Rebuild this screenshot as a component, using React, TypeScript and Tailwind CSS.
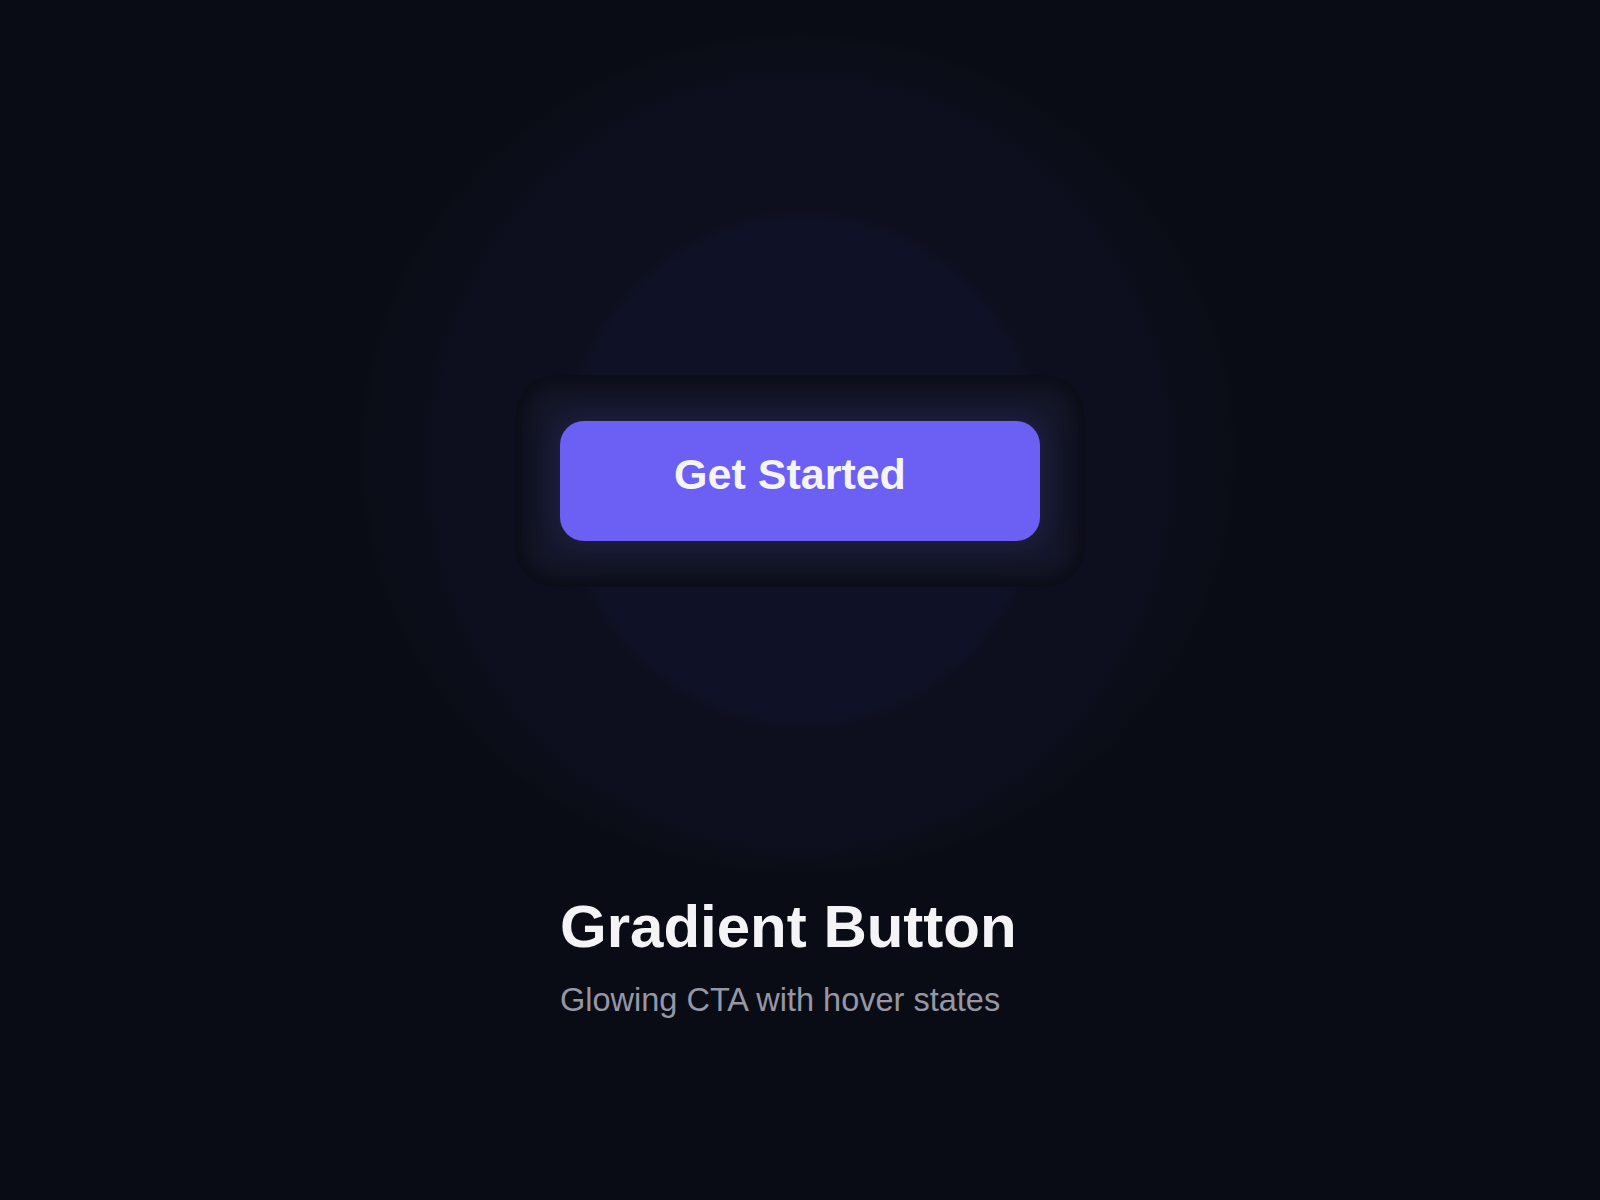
export default function App() {
  return (
    <main className="flex min-h-screen w-full justify-center bg-[#0a0c15] bg-[radial-gradient(ellipse_250px_265px_at_803px_470px,#0f1127_0%,#0f1126_92%,transparent_100%),radial-gradient(ellipse_383px_400px_at_800px_462px,#0d0f20_0%,#0d0f1f_94%,transparent_100%),radial-gradient(ellipse_441px_423px_at_798px_454px,#0b0d19_0%,#0b0d18_95%,transparent_100%)] pt-[375px] font-['Liberation_Sans',Arial,sans-serif]">
      <div className="flex w-[570px] flex-col">
        {/* dark shell around the CTA, lit from inside by the button */}
        <div className="rounded-[40px] bg-[#15172a] px-[45px] py-[46px] shadow-[inset_0_0_22px_10px_#0a0c15]">
          <button
            type="button"
            className="flex h-[120px] w-[480px] items-center justify-center rounded-[24px] bg-[#6c5ff4] pb-[14px] pr-[20px] text-[43px] font-bold text-[#f5f5f8] shadow-[0_0_24px_6px_rgba(99,91,240,0.12)] transition-colors hover:bg-[#7a6ef7]"
          >
            Get Started
          </button>
        </div>

        <div className="pl-[45px]">
          <h1 className="mt-[310px] text-[60px] font-bold leading-none text-[#f4f4f7]">Gradient Button</h1>
          <p className="mt-[27px] text-[32.5px] leading-none text-[#9597a5]">Glowing CTA with hover states</p>
        </div>
      </div>
    </main>
  );
}
